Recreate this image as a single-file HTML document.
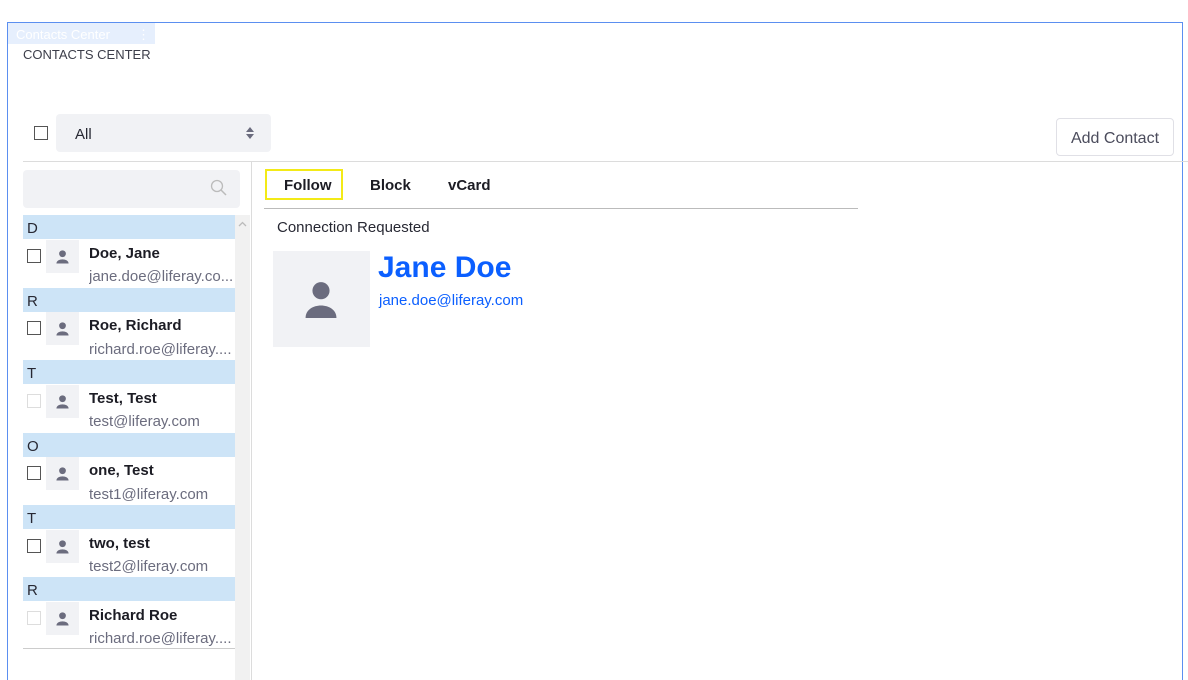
<!DOCTYPE html>
<html style="height:680px;overflow:hidden"><head><meta charset="utf-8"><style>
*{box-sizing:border-box;margin:0;padding:0}
body{width:1188px;height:680px;overflow:hidden;background:#fff;font-family:"Liberation Sans",sans-serif;position:relative;color:#272833}
.a{position:absolute}
.cb{position:absolute;width:14px;height:14px;border:1px solid #555;background:#fff}
.cb.l{border-color:#ddd}
.hd{position:absolute;left:23px;width:212px;height:24px;background:#cde4f7;font-size:15px;padding-left:4px;line-height:27px;color:#272833}
.av{position:absolute;left:46px;width:33px;height:33px;background:#f1f2f5}
.nm{position:absolute;left:89px;font-weight:bold;font-size:15px;color:#1c1c24}
.em{position:absolute;left:89px;font-size:15px;color:#6b6c7e;white-space:nowrap;width:146px;overflow:hidden}
</style></head><body>
<div class="a" style="left:7px;top:22px;width:1176px;height:658px;border:1px solid #5b8ff0;border-bottom:none"></div>
<div class="a" style="left:8px;top:23px;width:147px;height:21px;background:#e6effd;color:#fff;font-size:13px;line-height:23px;padding-left:8px">Contacts Center<span style="position:absolute;left:129px">⋮</span></div>
<div class="a" style="left:23px;top:47px;font-size:13px;color:#3c3e4a">CONTACTS CENTER</div>
<div class="cb" style="left:34px;top:126px"></div>
<div class="a" style="left:56px;top:114px;width:215px;height:38px;background:#f1f2f5;border-radius:4px;font-size:15px;line-height:41px;padding-left:19px">All
<svg class="a" style="left:189px;top:12px" width="10" height="14"><path d="M1 6 5 1 9 6Z M1 8 5 13 9 8Z" fill="#6b6c7e"/></svg></div>
<div class="a" style="left:1056px;top:118px;width:118px;height:38px;border:1px solid #e0e0e6;border-radius:4px;font-size:16px;color:#4b4c5c;line-height:40px;text-align:center">Add Contact</div>
<div class="a" style="left:23px;top:161px;width:1165px;height:1px;background:#dcdcdc"></div>
<div class="a" style="left:251px;top:161px;width:1px;height:520px;background:#dcdcdc"></div>
<div class="a" style="left:23px;top:170px;width:217px;height:38px;background:#f1f2f5;border-radius:4px"><svg class="a" style="left:187px;top:9px" width="18" height="18"><circle cx="7" cy="7" r="5.5" fill="none" stroke="#bbb" stroke-width="1.3"/><path d="M11 11 16 16" stroke="#bbb" stroke-width="1.5"/></svg></div>
<div class="a" style="left:235px;top:215px;width:15px;height:465px;background:#f1f1f1"><svg class="a" style="left:3px;top:6px" width="9" height="6"><path d="M1 5 4.5 1.5 8 5" fill="none" stroke="#bbb" stroke-width="1.3"/></svg></div>

<div class="hd" style="top:215px">D</div>
<div class="cb" style="left:27px;top:249px"></div><div class="av" style="top:240px"></div><div class="nm" style="top:245px">Doe, Jane</div><div class="em" style="top:268px">jane.doe@liferay.co...</div>
<div class="hd" style="top:288px">R</div>
<div class="cb" style="left:27px;top:321px"></div><div class="av" style="top:312px"></div><div class="nm" style="top:317px">Roe, Richard</div><div class="em" style="top:341px">richard.roe@liferay....</div>
<div class="hd" style="top:360px">T</div>
<div class="cb l" style="left:27px;top:394px"></div><div class="av" style="top:385px"></div><div class="nm" style="top:390px">Test, Test</div><div class="em" style="top:413px">test@liferay.com</div>
<div class="hd" style="top:433px">O</div>
<div class="cb" style="left:27px;top:466px"></div><div class="av" style="top:457px"></div><div class="nm" style="top:462px">one, Test</div><div class="em" style="top:486px">test1@liferay.com</div>
<div class="hd" style="top:505px">T</div>
<div class="cb" style="left:27px;top:539px"></div><div class="av" style="top:530px"></div><div class="nm" style="top:535px">two, test</div><div class="em" style="top:558px">test2@liferay.com</div>
<div class="hd" style="top:577px">R</div>
<div class="cb l" style="left:27px;top:611px"></div><div class="av" style="top:602px"></div><div class="nm" style="top:607px">Richard Roe</div><div class="em" style="top:630px">richard.roe@liferay....</div>
<div class="a" style="left:23px;top:648px;width:212px;height:1px;background:#ccc"></div>

<svg width="0" height="0" style="position:absolute"><defs><symbol id="p" viewBox="0 0 16 16"><circle cx="8" cy="5" r="3.6" fill="#6b6c7e"/><path d="M1.5 15.5C1.5 9.5 14.5 9.5 14.5 15.5Z" fill="#6b6c7e"/></symbol></defs></svg>
<svg class="a" style="left:55px;top:247px" width="15" height="19"><use href="#p"/></svg>
<svg class="a" style="left:55px;top:319px" width="15" height="19"><use href="#p"/></svg>
<svg class="a" style="left:55px;top:392px" width="15" height="19"><use href="#p"/></svg>
<svg class="a" style="left:55px;top:464px" width="15" height="19"><use href="#p"/></svg>
<svg class="a" style="left:55px;top:537px" width="15" height="19"><use href="#p"/></svg>
<svg class="a" style="left:55px;top:609px" width="15" height="19"><use href="#p"/></svg>

<div class="a" style="left:265px;top:169px;width:78px;height:31px;border:2px solid #f3ea17"></div>
<div class="a" style="left:284px;top:177px;font-size:15px;font-weight:bold;color:#1c1c24">Follow</div>
<div class="a" style="left:370px;top:177px;font-size:15px;font-weight:bold;color:#1c1c24">Block</div>
<div class="a" style="left:448px;top:177px;font-size:15px;font-weight:bold;color:#1c1c24">vCard</div>
<div class="a" style="left:264px;top:208px;width:594px;height:1px;background:#bbb"></div>
<div class="a" style="left:277px;top:219px;font-size:15px;color:#272833">Connection Requested</div>
<div class="a" style="left:273px;top:251px;width:97px;height:96px;background:#f1f2f5"></div>
<svg class="a" style="left:302px;top:278px" width="38" height="42" viewBox="0 0 16 17"><circle cx="8" cy="5" r="3.6" fill="#6b6c7e"/><path d="M1.5 16.5C1.5 9.5 14.5 9.5 14.5 16.5Z" fill="#6b6c7e"/></svg>
<div class="a" style="left:378px;top:251px;font-size:30px;font-weight:bold;color:#0b5fff">Jane Doe</div>
<div class="a" style="left:379px;top:292px;font-size:15px;color:#0b5fff">jane.doe@liferay.com</div>
</body></html>
